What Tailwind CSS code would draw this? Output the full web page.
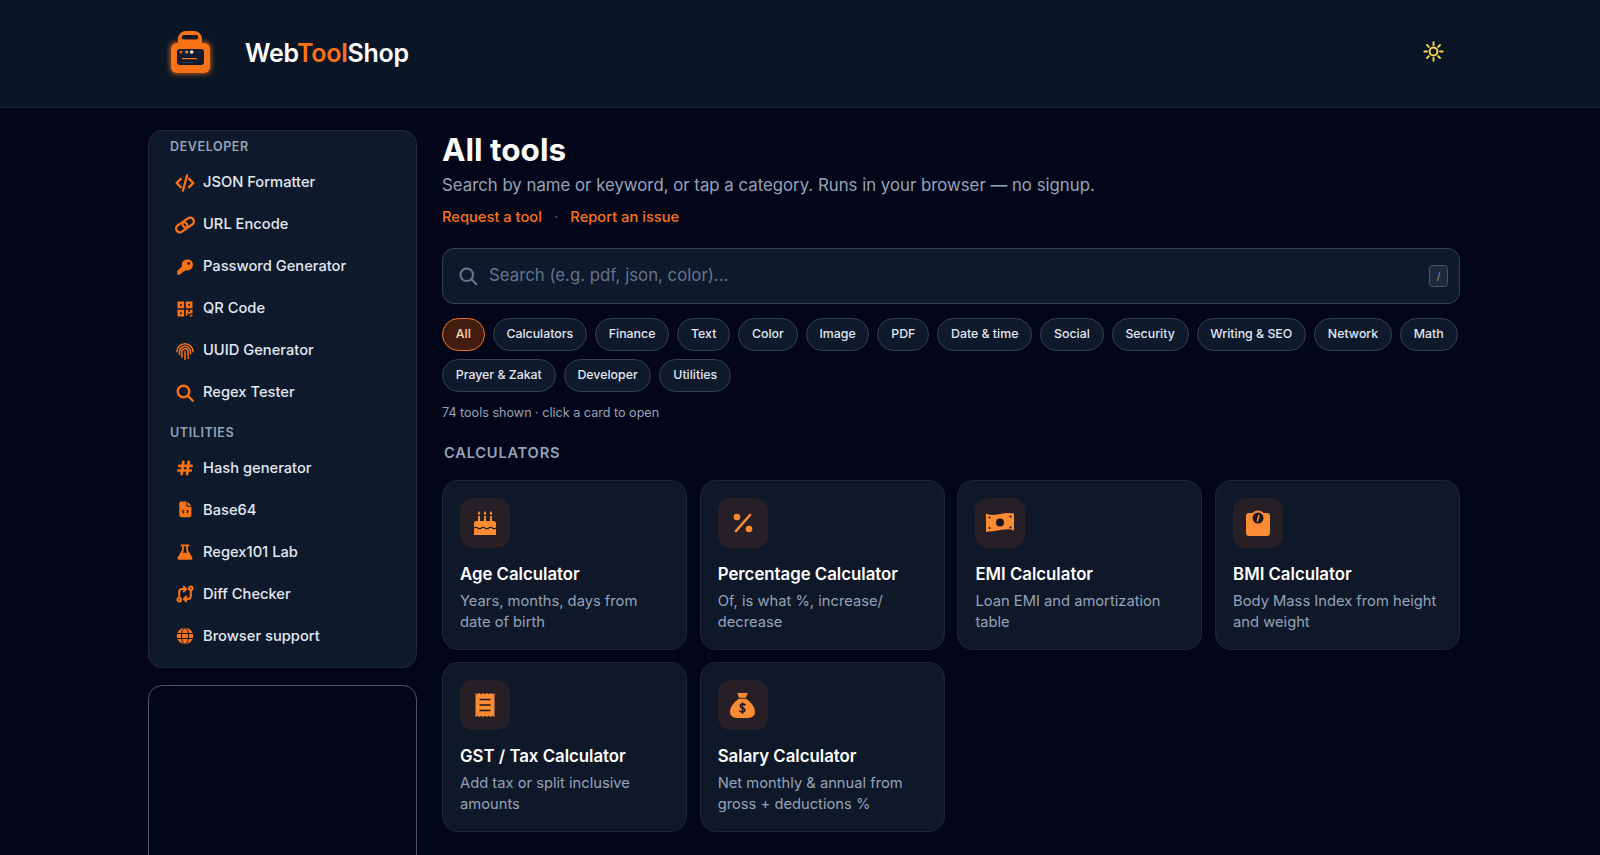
<!doctype html>
<html lang="en">
<head>
<meta charset="utf-8">
<title>WebToolShop</title>
<script src="https://cdn.jsdelivr.net/npm/@tailwindcss/browser@4"></script>
</head>
<body class="h-[855px] overflow-hidden bg-[#030618] font-['Inter','Liberation_Sans',sans-serif] text-white">
<header class="h-[108px] border-b border-[#1a2638] bg-[#0a1626] pl-[165px] pr-[156px] flex items-center justify-between">
  <div class="flex items-center gap-[25px] -mt-[1px]">
    <svg class="w-[55px] h-[55px]" viewBox="0 0 55 55">
      <defs><filter id="g" x="-30%" y="-30%" width="160%" height="160%"><feGaussianBlur stdDeviation="2.500"/></filter></defs>
      <rect x="5" y="16" width="41" height="32" rx="6" fill="#f97316" opacity=".7" filter="url(#g)"/>
      <path fill-rule="evenodd" d="M13 17v-4a8 8 0 0 1 8-8h8a8 8 0 0 1 8 8v4zM19 9a2.300 2.300 0 0 0 0 4.600h12a2.300 2.300 0 0 0 0-4.600z" fill="#f97316"/>
      <rect x="6" y="17" width="39" height="30" rx="6" fill="#f97316"/>
      <rect x="12" y="23" width="27" height="16" rx="3" fill="#0f1c2e"/>
      <circle cx="16" cy="26" r="1.600" fill="#ea580c"/>
      <circle cx="21.700" cy="26" r="1.600" fill="#c98a5e"/>
      <circle cx="26.700" cy="26" r="1.800" fill="#fde0c2"/>
      <rect x="17" y="32" width="15" height="1.200" fill="#f97316"/>
      <rect x="18" y="36" width="10" height="1" fill="#26405c"/>
    </svg>
    <div class="text-[25px] font-semibold tracking-[-0.25px] leading-none">Web<span class="text-[#f97316]">Tool</span>Shop</div>
  </div>
  <svg class="w-[21px] h-[21px] -mt-[4px] text-[#fcd34d]" viewBox="0 0 24 24" fill="none" stroke="currentColor" stroke-width="2.200" stroke-linecap="round"><circle cx="12" cy="12" r="4.500"/><path d="M12 1.500v3M12 19.500v3M1.500 12h3M19.500 12h3M4.600 4.600l2.100 2.100M17.300 17.300l2.100 2.100M4.600 19.400l2.100-2.100M17.300 6.700l2.100-2.100"/></svg>
</header>

<div class="flex gap-[25px] pl-[148px] pr-[140px] pt-[22px]">
  <aside class="w-[269px] shrink-0 flex flex-col gap-[17px]">
    <nav class="h-[538px] rounded-[14px] border border-[#1e293b] bg-[#0f192c] pt-[8px] text-[14.700px] font-medium text-[#e2e8f0]">
      <div class="pl-[21px] text-[12.500px] leading-[16px] font-semibold tracking-[0.6px] text-[#94a3b8]">DEVELOPER</div>
      <ul class="mt-[6.500px] pl-[26px]">
        <li class="h-[42px] flex items-center gap-[8px]"><svg class="w-5 h-5 text-[#f97316]" viewBox="0 0 24 24" fill="none" stroke="currentColor" stroke-width="2.800" stroke-linecap="round" stroke-linejoin="round"><path d="M7 7l-5 5 5 5M17 7l5 5-5 5M14.500 3l-5 18"/></svg>JSON Formatter</li>
        <li class="h-[42px] flex items-center gap-[8px]"><svg class="w-5 h-5 text-[#f97316]" viewBox="0 0 24 24" fill="none" stroke="currentColor" stroke-width="2.700"><g transform="rotate(-35 12 12)"><rect x="0" y="7.500" width="14.500" height="9" rx="4.500"/><rect x="9.500" y="7.500" width="14.500" height="9" rx="4.500"/></g></svg>URL Encode</li>
        <li class="h-[42px] flex items-center gap-[8px]"><svg class="w-5 h-5 text-[#f97316]" viewBox="-2 -2 28 28" fill="currentColor"><path fill-rule="evenodd" d="M15 1a8 8 0 1 1-2.600 15.500L10.500 18.500H8v2.500H5.500V23H2.500A1.500 1.500 0 0 1 1 21.500v-3c0-.4.200-.8.400-1.100l6.300-6.200A8 8 0 0 1 15 1zm2 4a2 2 0 1 0 0 4 2 2 0 0 0 0-4z"/></svg>Password Generator</li>
        <li class="h-[42px] flex items-center gap-[8px]"><svg class="w-5 h-5 text-[#f97316]" viewBox="0 0 24 24" fill="currentColor"><path fill-rule="evenodd" d="M3 3h8v8H3zm3 3v2h2V6zM13 3h8v8h-8zm3 3v2h2V6zM3 13h8v8H3zm3 3v2h2v-2z"/><path d="M13 13h3v3h2v-3h3v4h-3v1h-2v-1h-1v3h-2zM18 19h3v2h-3z"/></svg>QR Code</li>
        <li class="h-[42px] flex items-center gap-[8px]"><svg class="w-5 h-5 text-[#f97316]" viewBox="-1 -1 26 26" fill="none" stroke="currentColor" stroke-width="2" stroke-linecap="round"><path d="M1.500 13a10.500 10.500 0 0 1 21 0"/><path d="M4.800 17v-4a7.200 7.200 0 0 1 14.400 0v2.500"/><path d="M8 20V13a4 4 0 0 1 8 0v5"/><path d="M12 23v-10"/><path d="M16 21.500l.5-1.500"/></svg>UUID Generator</li>
        <li class="h-[42px] flex items-center gap-[8px]"><svg class="w-5 h-5 text-[#f97316]" viewBox="-1.500 -1.500 27 27" fill="none" stroke="currentColor" stroke-width="3.200" stroke-linecap="round"><circle cx="10" cy="10" r="7.800"/><path d="M16 16l6.500 6.500"/></svg>Regex Tester</li>
      </ul>
      <div class="pl-[21px] mt-[11.500px] text-[12.500px] leading-[16px] font-semibold tracking-[0.6px] text-[#94a3b8]">UTILITIES</div>
      <ul class="mt-[6px] pl-[26px]">
        <li class="h-[42px] flex items-center gap-[8px]"><svg class="w-5 h-5 text-[#f97316]" viewBox="0 0 24 24" fill="none" stroke="currentColor" stroke-width="3.200" stroke-linecap="round"><path d="M10 4.500L8 19.500M16.500 4.500l-2 15M5 9.500h15M4 15h15"/></svg>Hash generator</li>
        <li class="h-[42px] flex items-center gap-[8px]"><svg class="w-5 h-5 text-[#f97316]" viewBox="-2 -1 28 28"><path fill="currentColor" d="M6.500 1H14v6a1.500 1.500 0 0 0 1.500 1.500H21v12A2.500 2.500 0 0 1 18.500 23h-12A2.500 2.500 0 0 1 4 20.500v-17A2.500 2.500 0 0 1 6.500 1zM15.500 1l5.500 6h-5.500z"/><path fill="none" stroke="#0f192c" stroke-width="1.500" d="M10.500 13l-2 2.200 2 2.200M14.500 13l2 2.200-2 2.200"/></svg>Base64</li>
        <li class="h-[42px] flex items-center gap-[8px]"><svg class="w-5 h-5 text-[#f97316]" viewBox="-2 -2 28 28" fill="currentColor"><path d="M7 1.500h10a1.200 1.200 0 0 1 0 2.500h-.8v5.500l5.900 9.700A2.500 2.500 0 0 1 20 23H4a2.500 2.500 0 0 1-2.100-3.800l5.900-9.700V4H7a1.200 1.200 0 0 1 0-2.500z"/><path fill="#0f192c" d="M10.300 4h3.400v6.200l1.500 2.800H8.800l1.500-2.800z"/></svg>Regex101 Lab</li>
        <li class="h-[42px] flex items-center gap-[8px]"><svg class="w-5 h-5 text-[#f97316]" viewBox="-1 -1 26 26" fill="none" stroke="currentColor" stroke-width="2.700" stroke-linecap="round" stroke-linejoin="round"><circle cx="19.500" cy="4.500" r="2.300"/><circle cx="4.500" cy="19.500" r="2.300"/><path d="M4.500 17V9a3.500 3.500 0 0 1 3.500-3.500H13M10.500 2.500l3 3-3 3M19.500 7v8a3.500 3.500 0 0 1-3.500 3.500h-5M13.500 15.500l-3 3 3 3"/></svg>Diff Checker</li>
        <li class="h-[42px] flex items-center gap-[8px]"><svg class="w-5 h-5 text-[#f97316]" viewBox="-2 -2 28 28"><circle cx="12" cy="12" r="11.500" fill="currentColor"/><g fill="none" stroke="#0f192c" stroke-width="1.400"><ellipse cx="12" cy="12" rx="5" ry="11.500"/><path d="M1 8.500h22M1 15.500h22"/></g></svg>Browser support</li>
      </ul>
    </nav>
    <div class="h-[300px] rounded-[14px] border border-[#475569] bg-[#020516]"></div>
  </aside>

  <main class="flex-1 min-w-0">
    <h1 class="text-[31.500px] leading-[40px] font-bold">All tools</h1>
    <p class="mt-[3px] text-[16.800px] leading-[24px] text-[#94a3b8]">Search by name or keyword, or tap a category. Runs in your browser — no signup.</p>
    <div class="mt-[10px] flex items-center text-[14.700px] leading-[20px] font-medium text-[#f97316]"><span>Request a tool</span><span class="mx-[12px] text-[#475569]">·</span><span>Report an issue</span></div>

    <div class="mt-[21px] h-[56px] rounded-[12px] border border-[#334155] bg-[#0f192c] pl-[15px] pr-[11px] flex items-center">
      <svg class="w-[20px] h-[20px] text-[#64748b]" viewBox="0 0 24 24" fill="none" stroke="currentColor" stroke-width="2.600" stroke-linecap="round"><circle cx="10.500" cy="10.500" r="7.500"/><path d="M16 16l6 6"/></svg>
      <span class="ml-[11px] flex-1 text-[16.800px] text-[#64748b]">Search (e.g. pdf, json, color)...</span>
      <span class="w-[19px] h-[22px] rounded-[4px] border border-[#475569] bg-[#1e293b] flex items-center justify-center text-[10px] text-[#94a3b8]">/</span>
    </div>

    <div class="mt-[14px] flex flex-wrap gap-x-[8px] gap-y-[8px] text-[12.350px] font-medium text-[#e2e8f0]">
      <span class="h-[33px] px-[12.800px] flex items-center rounded-full border border-[#f97316] bg-[#431c10] text-[#fed7aa]">All</span>
      <span class="h-[33px] px-[12.800px] flex items-center rounded-full border border-[#334155] bg-[#0f192c]">Calculators</span>
      <span class="h-[33px] px-[12.800px] flex items-center rounded-full border border-[#334155] bg-[#0f192c]">Finance</span>
      <span class="h-[33px] px-[12.800px] flex items-center rounded-full border border-[#334155] bg-[#0f192c]">Text</span>
      <span class="h-[33px] px-[12.800px] flex items-center rounded-full border border-[#334155] bg-[#0f192c]">Color</span>
      <span class="h-[33px] px-[12.800px] flex items-center rounded-full border border-[#334155] bg-[#0f192c]">Image</span>
      <span class="h-[33px] px-[12.800px] flex items-center rounded-full border border-[#334155] bg-[#0f192c]">PDF</span>
      <span class="h-[33px] px-[12.800px] flex items-center rounded-full border border-[#334155] bg-[#0f192c]">Date &amp; time</span>
      <span class="h-[33px] px-[12.800px] flex items-center rounded-full border border-[#334155] bg-[#0f192c]">Social</span>
      <span class="h-[33px] px-[12.800px] flex items-center rounded-full border border-[#334155] bg-[#0f192c]">Security</span>
      <span class="h-[33px] px-[12.800px] flex items-center rounded-full border border-[#334155] bg-[#0f192c]">Writing &amp; SEO</span>
      <span class="h-[33px] px-[12.800px] flex items-center rounded-full border border-[#334155] bg-[#0f192c]">Network</span>
      <span class="h-[33px] px-[12.800px] flex items-center rounded-full border border-[#334155] bg-[#0f192c]">Math</span>
      <span class="h-[33px] px-[12.800px] flex items-center rounded-full border border-[#334155] bg-[#0f192c]">Prayer &amp; Zakat</span>
      <span class="h-[33px] px-[12.800px] flex items-center rounded-full border border-[#334155] bg-[#0f192c]">Developer</span>
      <span class="h-[33px] px-[12.800px] flex items-center rounded-full border border-[#334155] bg-[#0f192c]">Utilities</span>
    </div>

    <p class="mt-[12px] text-[12.600px] leading-[18px] text-[#94a3b8]">74 tools shown · click a card to open</p>
    <h2 class="mt-[21px] pl-[2px] text-[14.700px] leading-[20px] font-semibold tracking-[0.75px] text-[#94a3b8]">CALCULATORS</h2>

    <div class="mt-[17px] grid grid-cols-4 gap-[12.800px]">
      <article class="h-[169.500px] rounded-[16px] border border-[#1c2638] bg-[#0f1829] p-[17px]">
        <div class="w-[50px] h-[50px] rounded-[13px] bg-[#271f26] flex items-center justify-center"><svg class="w-[26px] h-[26px] text-[#fb8c33]" viewBox="0 0 26 26" fill="currentColor"><path d="M6 6h2v6H6zM12 6h2v6h-2zM18 6h2v6h-2z"/><path d="M7 1c.8 1.100 1.200 1.800 1.200 2.500a1.200 1.200 0 0 1-2.400 0C5.800 2.800 6.200 2.100 7 1zM13 1c.8 1.100 1.200 1.800 1.200 2.500a1.200 1.200 0 0 1-2.400 0c0-.7.400-1.400 1.200-2.500zM19 1c.8 1.100 1.200 1.800 1.200 2.500a1.200 1.200 0 0 1-2.400 0c0-.7.400-1.400 1.200-2.500z"/><path d="M4.500 11h17A2.500 2.500 0 0 1 24 13.500V25H2V13.500A2.500 2.500 0 0 1 4.500 11z"/><path d="M2 18c1.300-1 2.500-1 3.700 0s2.500 1 3.700 0 2.400-1 3.600 0 2.500 1 3.700 0 2.400-1 3.600 0 2.500.8 3.700 0" fill="none" stroke="#1a1520" stroke-width="1.100"/></svg></div>
        <h3 class="mt-[13px] text-[16.800px] leading-[26px] font-semibold">Age Calculator</h3>
        <p class="mt-[4px] text-[14.720px] leading-[21px] text-[#94a3b8]">Years, months, days from date of birth</p>
      </article>
      <article class="h-[169.500px] rounded-[16px] border border-[#1c2638] bg-[#0f1829] p-[17px]">
        <div class="w-[50px] h-[50px] rounded-[13px] bg-[#271f26] flex items-center justify-center"><svg class="w-[24px] h-[24px] text-[#fb8c33]" viewBox="0 0 24 24" fill="currentColor"><circle cx="6" cy="6" r="3.300"/><circle cx="18" cy="18" r="3.300"/><path d="M19 4L5 20" stroke="currentColor" stroke-width="2.600" stroke-linecap="round"/></svg></div>
        <h3 class="mt-[13px] text-[16.800px] leading-[26px] font-semibold">Percentage Calculator</h3>
        <p class="mt-[4px] text-[14.720px] leading-[21px] text-[#94a3b8]">Of, is what %, increase/ decrease</p>
      </article>
      <article class="h-[169.500px] rounded-[16px] border border-[#1c2638] bg-[#0f1829] p-[17px]">
        <div class="w-[50px] h-[50px] rounded-[13px] bg-[#271f26] flex items-center justify-center"><svg class="w-[30px] h-[30px] text-[#fb8c33]" viewBox="0 0 30 30"><path fill="currentColor" d="M1 5.500c4 2 9 1.500 14 .5s10-1.500 14-.5v17c-4-2-9-1.500-14-.5s-10 1.500-14 2z"/><circle cx="15" cy="14.500" r="4" fill="#1a1520"/><g fill="#1a1520"><circle cx="4.500" cy="9.500" r="1.100"/><circle cx="25.500" cy="8.500" r="1.100"/><circle cx="4.500" cy="20" r="1.100"/><circle cx="25.500" cy="19.500" r="1.100"/></g></svg></div>
        <h3 class="mt-[13px] text-[16.800px] leading-[26px] font-semibold">EMI Calculator</h3>
        <p class="mt-[4px] text-[14.720px] leading-[21px] text-[#94a3b8]">Loan EMI and amortization table</p>
      </article>
      <article class="h-[169.500px] rounded-[16px] border border-[#1c2638] bg-[#0f1829] p-[17px]">
        <div class="w-[50px] h-[50px] rounded-[13px] bg-[#271f26] flex items-center justify-center"><svg class="w-[26px] h-[26px] text-[#fb8c33]" viewBox="0 0 26 26"><path fill="currentColor" d="M4 3h18a3 3 0 0 1 3 3v17a3 3 0 0 1-3 3H4a3 3 0 0 1-3-3V6a3 3 0 0 1 3-3z"/><circle cx="13" cy="8" r="7.500" fill="#fb8c33"/><circle cx="13" cy="8" r="5.500" fill="#1a1520"/><path d="M12.400 11l1.400-5.500" stroke="#fb8c33" stroke-width="1.600" stroke-linecap="round"/></svg></div>
        <h3 class="mt-[13px] text-[16.800px] leading-[26px] font-semibold">BMI Calculator</h3>
        <p class="mt-[4px] text-[14.720px] leading-[21px] text-[#94a3b8]">Body Mass Index from height and weight</p>
      </article>
      <article class="h-[169.500px] rounded-[16px] border border-[#1c2638] bg-[#0f1829] p-[17px]">
        <div class="w-[50px] h-[50px] rounded-[13px] bg-[#271f26] flex items-center justify-center"><svg class="w-[26px] h-[26px] text-[#fb8c33]" viewBox="0 0 26 26"><path fill="currentColor" d="M3.500 1l1.900 1.200L7.200 1l1.900 1.200L11 1l2 1.200L15 1l1.900 1.200L18.800 1l1.800 1.200L22.500 1v24l-1.900-1.200-1.800 1.200-1.900-1.200L15 25l-2-1.200L11 25l-1.900-1.200L7.200 25l-1.800-1.200L3.500 25z"/><path d="M7.500 7.500h11M7.500 13h11M7.500 18.500h11" stroke="#1a1520" stroke-width="1.500"/></svg></div>
        <h3 class="mt-[13px] text-[16.800px] leading-[26px] font-semibold">GST / Tax Calculator</h3>
        <p class="mt-[4px] text-[14.720px] leading-[21px] text-[#94a3b8]">Add tax or split inclusive amounts</p>
      </article>
      <article class="h-[169.500px] rounded-[16px] border border-[#1c2638] bg-[#0f1829] p-[17px]">
        <div class="w-[50px] h-[50px] rounded-[13px] bg-[#271f26] flex items-center justify-center"><svg class="w-[27px] h-[27px] text-[#fb8c33]" viewBox="0 0 26 26"><path fill="currentColor" d="M8 1h10l-1.700 4.500H9.700zM9.500 6.500h7C21 9.500 25 14.500 25 19c0 3.800-2.700 6-6.500 6h-11C3.700 25 1 22.800 1 19c0-4.500 4-9.500 8.500-12.500z"/><path d="M15.500 12.500c-.8-1-3.700-1.200-4.500.2-.8 1.500.6 2.300 2 2.800 1.500.5 2.800 1.200 2.100 2.800-.7 1.400-3.700 1.300-4.600.1M13 10.500v10" fill="none" stroke="#1a1520" stroke-width="1.500" stroke-linecap="round"/></svg></div>
        <h3 class="mt-[13px] text-[16.800px] leading-[26px] font-semibold">Salary Calculator</h3>
        <p class="mt-[4px] text-[14.720px] leading-[21px] text-[#94a3b8]">Net monthly &amp; annual from gross + deductions %</p>
      </article>
    </div>
  </main>
</div>
</body>
</html>
